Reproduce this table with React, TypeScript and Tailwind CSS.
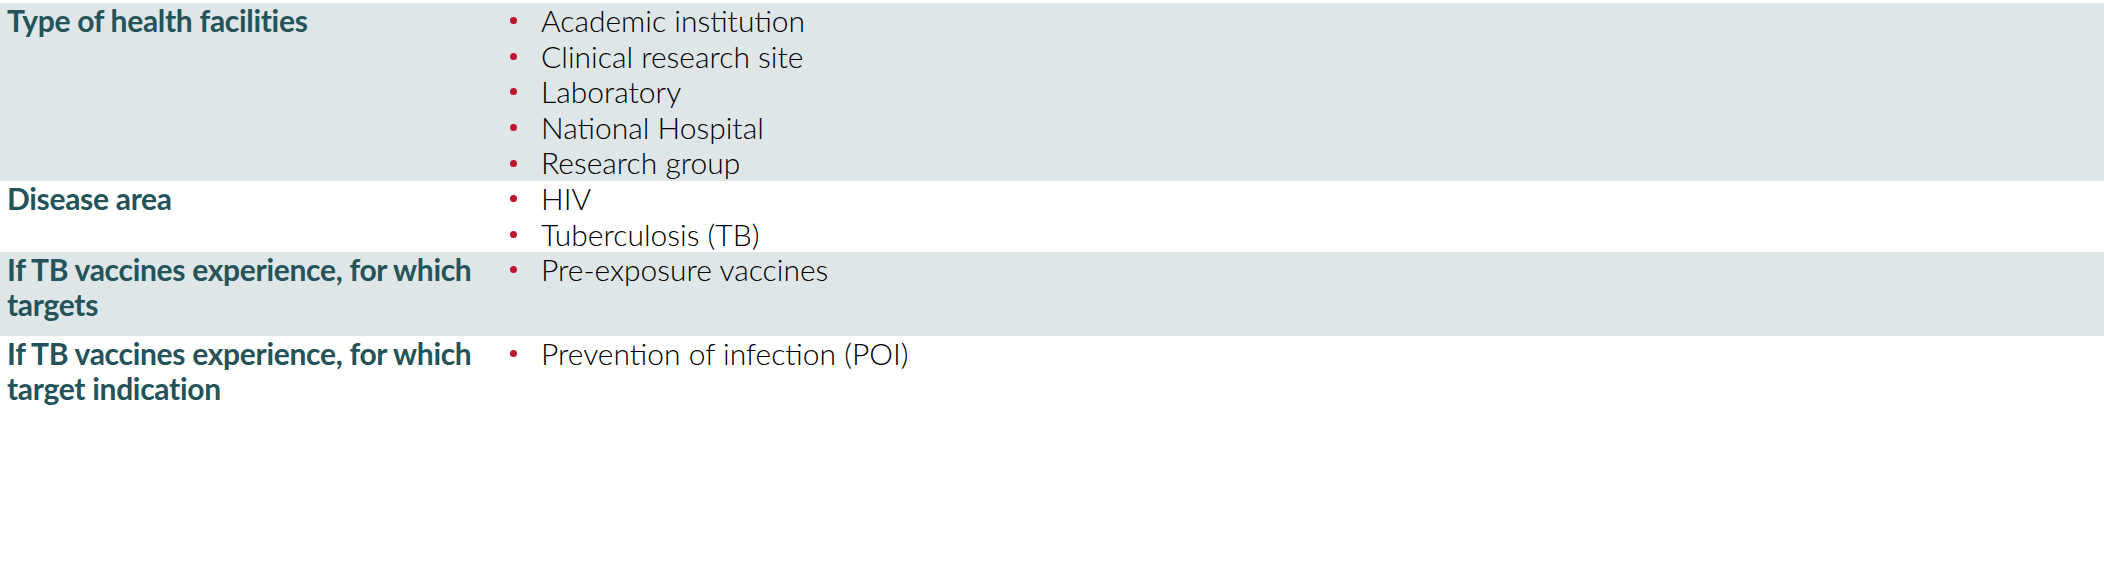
import React from 'react';

interface Row {
  label: string;
  items: string[];
  shaded: boolean;
}

const rows: Row[] = [
  {
    label: 'Type of health facilities',
    items: ['Academic institution', 'Clinical research site', 'Laboratory', 'National Hospital', 'Research group'],
    shaded: true,
  },
  { label: 'Disease area', items: ['HIV', 'Tuberculosis (TB)'], shaded: false },
  { label: 'If TB vaccines experience, for which targets', items: ['Pre-exposure vaccines'], shaded: true },
  {
    label: 'If TB vaccines experience, for which target indication',
    items: ['Prevention of infection (POI)'],
    shaded: false,
  },
];

const App: React.FC = () => {
  return (
    <div className="w-[2104px] h-[579px] bg-white pt-[3px] font-['Lato',sans-serif]">
      {rows.map((row) => (
        <div key={row.label} className={`flex w-full ${row.shaded ? 'bg-[#dfe6e8]' : 'bg-white'}`}>
          {/* Label */}
          <div className="w-[500px] shrink-0 pl-[7px] pr-[8px] pb-[14px]">
            <span className="text-[30px] leading-[35px] font-bold text-[#245359] tracking-[-0.3px]">
              {row.label}
            </span>
          </div>

          {/* Values */}
          <ul className="flex-1">
            {row.items.map((item) => (
              <li key={item} className="flex items-center h-[35.6px]">
                <span className="w-[41px] shrink-0 flex items-center">
                  <span className="ml-[10px] w-[7px] h-[7px] rounded-full bg-[#c0132f]" />
                </span>
                <span className="text-[30px] leading-[35.6px] font-light text-black">{item}</span>
              </li>
            ))}
          </ul>
        </div>
      ))}
    </div>
  );
};

export default App;
